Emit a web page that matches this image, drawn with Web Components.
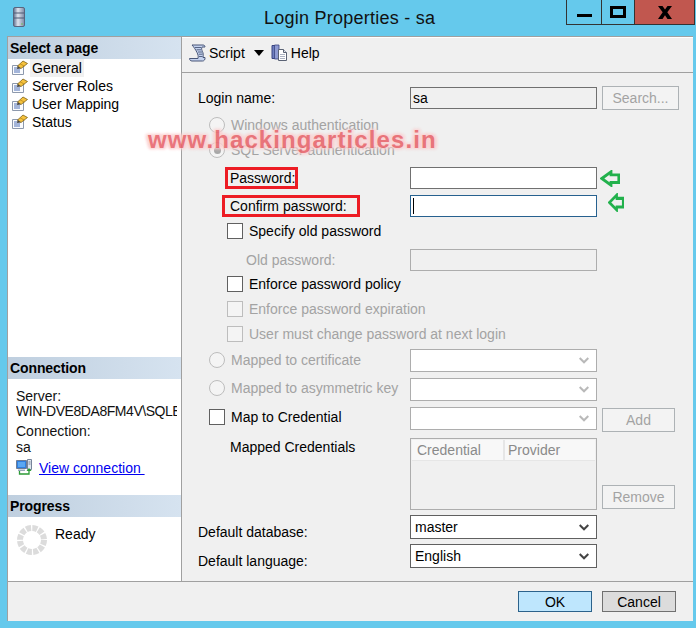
<!DOCTYPE html>
<html>
<head>
<meta charset="utf-8">
<title>Login Properties - sa</title>
<style>
  html, body { margin: 0; padding: 0; background: #65c9ec; }
  body { font-family: "Liberation Sans", Arial, sans-serif; font-size: 14px; color: #000; }
</style>
</head>
<body>
<login-window></login-window>
<script>
// small base class, every element just gives css + html
class Base extends HTMLElement {
  constructor () {
    super()
    this.shadow = this.attachShadow({ mode: 'open' })
  }

  connectedCallback () {
    this.shadow.innerHTML = `<style>${this.css()}</style>${this.html()}`
  }

  css () { return ':host{display:block}' }
  html () { return '<slot></slot>' }
}

const PAGE_ICON = `<svg width="17" height="16" viewBox="0 0 17 16">
  <path d="M1.500 5.500h11v9h-11z" fill="#fbfcfe" stroke="#8d99ad"/>
  <path d="M3 8h3M3 10h6M3 12h6" stroke="#4d6fb5"/>
  <path d="M6.500 6l5.500-5 4.500 2.500-6.500 5z" fill="#f5c23e" stroke="#7d6218" stroke-width=".8"/>
  <path d="M9 3.800l4.500 2.400" stroke="#b98a1e" stroke-width=".8"/>
  <path d="M6.500 6l3.500 2.500-4 .5z" fill="#444"/>
</svg>`

const SCRIPT_ICON = `<svg width="18" height="18" viewBox="0 0 18 18">
  <path d="M3 1h11c1.500 0 2 1 2 2h-3c-.8 1.500-.2 3 .5 4.500s1 3.500.5 6h2c.3 2-.8 3.500-2.500 3.500H3c-1.600 0-2.500-1.200-2.500-2.500h8.500c.5-2.300 0-4-1-6S5 3 3 1z" fill="#c5d3ef" stroke="#4a5778"/>
  <path d="M6 3.500h6M7.500 5.800h4.500M9 8h4M9.800 10.200h3.700M10 12.500h3.500" stroke="#4a5778" stroke-width=".9"/>
</svg>`

const HELP_ICON = `<svg width="17" height="18" viewBox="0 0 17 18">
  <path d="M1 1.500h6v13H1z" fill="#6f7fc0" stroke="#3a4580"/>
  <path d="M3.500 1h4.500v14H3.500z" fill="#8f9bd2" stroke="#3a4580" stroke-width=".8"/>
  <path d="M7.500 5.500h5l3 3v8h-8z" fill="#fff" stroke="#5a6274"/>
  <path d="M12.500 5.500v3h3" fill="#dfe4ee" stroke="#5a6274"/>
  <path d="M9 10.500h5M9 12.500h5M9 14.500h5" stroke="#98a0b2" stroke-width=".8"/>
</svg>`

const CONN_ICON = `<svg width="17" height="16" viewBox="0 0 17 16">
  <path d="M.5 1.500h10v8H.5z" fill="#2f7fe0" stroke="#6d7d96"/>
  <path d="M2 3h7v5H2z" fill="#5aa7f2"/>
  <path d="M2 10.500h7v1.500H2z" fill="#9aa8ba"/>
  <path d="M11.500.500h4v10h-4z" fill="#dfe6ee" stroke="#77849a"/>
  <path d="M12.500 3h2M12.500 5h2" stroke="#77849a"/>
  <path d="M3.500 12v3h9.500V11" fill="none" stroke="#2c9a36" stroke-width="1.300"/>
  <path d="M10.500 12l2.500-3 2.500 3z" fill="#2c9a36"/>
</svg>`

class TitleBar extends Base {
  css () {
    return `
    :host{display:flex;height:36px;align-items:flex-start;position:relative}
    .logo{margin:7px 0 0 13px;width:12px;height:20px}
    .text{margin:7px 0 0 239px;font:18px/22px "Liberation Sans",sans-serif;color:#111;letter-spacing:.25px;white-space:nowrap}
    .btns{display:flex;height:25px;margin-left:auto;margin-right:1px;border:solid #333;border-width:0 1px 1px 1px;box-sizing:border-box;width:129px}
    .b{display:flex;align-items:center;justify-content:center;box-sizing:border-box}
    .min{width:35px;border-right:1px solid #333}
    .max{width:33px;border-right:1px solid #333}
    .close{flex:1;background:#c1574f}
    `
  }

  html () {
    return `
    <svg class="logo" viewBox="0 0 12 20">
      <defs><linearGradient id="g" x1="0" x2="1" y1="0" y2="0"><stop offset="0" stop-color="#5b6c8c"/><stop offset=".4" stop-color="#dfe4ee"/><stop offset="1" stop-color="#7a88a4"/></linearGradient></defs>
      <rect x=".5" y=".5" width="11" height="19" rx="1.500" fill="url(#g)" stroke="#59657e"/>
      <path d="M1 6h10M1 11h10" stroke="#4f5b74"/>
      <path d="M8 17h2" stroke="#6fbf5f"/>
    </svg>
    <span class="text">Login Properties - sa</span>
    <div class="btns">
      <div class="b min"><svg width="15" height="14" viewBox="0 0 15 14"><rect y="9" width="15" height="3"/></svg></div>
      <div class="b max"><svg width="16" height="12" viewBox="0 0 16 12"><path d="M0 0h16v12H0z M3 3v6h10V3z" fill-rule="evenodd"/></svg></div>
      <div class="b close"><svg width="14" height="13" viewBox="0 0 14 13"><path d="M0 0h4.500l2.500 3.600L9.500 0H14L9.300 6.300 14 13H9.500L7 9.300 4.500 13H0l4.700-6.700z"/></svg></div>
    </div>`
  }
}

class PaneHead extends Base {
  css () {
    return `:host{display:block;height:22px;line-height:22px;padding-left:2px;font-weight:bold;font-size:14px;letter-spacing:-.1px;
      background:linear-gradient(90deg,#bfcfdf,#d6e3f0)}`
  }
}

class PageLink extends Base {
  css () {
    return `
    :host{display:flex;height:18px;align-items:center;padding-left:3px;font-size:14px}
    svg{flex:none}
    span{padding:0 2px;margin-left:2px;line-height:18px}
    :host([active]) span{background:#f0f0f0}`
  }

  html () { return `${PAGE_ICON}<span><slot></slot></span>` }
}

class SidePane extends Base {
  css () {
    return `
    :host{display:flex;flex-direction:column;width:173px;flex:none;background:#fff;border-right:1px solid #a0a0a0}
    .pages{flex:1}
    .conn{height:138px}
    .prog{height:86px}
    .info{padding:9px 3px 0 8px;font-size:14px;line-height:16px;color:#111}
    .clip{overflow:hidden;white-space:nowrap;width:161px;line-height:15px;letter-spacing:-.45px}
    .sp{height:4px}
    .link{display:flex;align-items:flex-start;margin-top:4px}
    .link a{color:#0000f0;text-decoration:underline;margin:1px 0 0 6px;white-space:pre;line-height:17px}
    .ready{display:flex;padding:8px 0 0 9px}
    .ready span{margin-left:8px;line-height:18px}`
  }

  html () {
    return `
    <div class="pages">
      <pane-head>Select a page</pane-head>
      <page-link active>General</page-link>
      <page-link>Server Roles</page-link>
      <page-link>User Mapping</page-link>
      <page-link>Status</page-link>
    </div>
    <div class="conn">
      <pane-head>Connection</pane-head>
      <div class="info">
        <div>Server:</div>
        <div class="clip">WIN-DVE8DA8FM4V\\SQLE</div>
        <div class="sp"></div>
        <div>Connection:</div>
        <div>sa</div>
        <div class="link">${CONN_ICON}<a>View connection </a></div>
      </div>
    </div>
    <div class="prog">
      <pane-head>Progress</pane-head>
      <div class="ready">
        <svg width="30" height="30" viewBox="0 0 30 30"><circle cx="15" cy="15" r="12" fill="none" stroke="#dcdcdc" stroke-width="6" stroke-dasharray="5 1.280"/></svg>
        <span>Ready</span>
      </div>
    </div>`
  }
}

class ToolBar extends Base {
  css () {
    return `
    :host{display:flex;align-items:center;border-top:1px solid #fff;border-bottom:1px solid #a0a0a0;padding:0 0 4px 7px;box-sizing:border-box;height:36px;font-size:14px}
    span{margin-left:2px}
    span.help{margin-left:3px}
    .arrow{width:0;height:0;border:5px solid transparent;border-top:6px solid #000;border-bottom:0;margin:0 7px 0 9px}`
  }

  html () {
    return `${SCRIPT_ICON}<span>Script</span><i class="arrow"></i>${HELP_ICON}<span class="help">Help</span>`
  }
}

class FormRow extends Base {
  css () {
    return `
    :host{display:grid;grid-template-columns:212px 187px auto;grid-template-rows:minmax(0,1fr);align-items:center;font-size:14px}
    :host([list]) .lab{align-self:start}
    .side{display:flex;padding-left:5px;align-self:stretch;align-items:center}
    :host([list]) .side{align-items:flex-end}`
  }

  connectedCallback () {
    super.connectedCallback()
    this.style.height = this.getAttribute('h') + 'px'
    this.style.marginTop = (this.getAttribute('top') || 0) + 'px'
  }

  html () {
    return `<div class="lab"><slot name="label"></slot></div><div><slot name="field"></slot></div><div class="side"><slot name="side"></slot></div>`
  }
}

class PlainLabel extends Base {
  css () {
    return `:host{display:block;white-space:nowrap}
    :host([off]){color:#a3a3a3}`
  }

  connectedCallback () {
    super.connectedCallback()
    this.style.paddingLeft = (this.getAttribute('x') || 0) + 'px'
  }
}

// red marker the author drew round a label
class MarkBox extends Base {
  css () {
    return `:host{display:block;box-sizing:border-box;height:22px;line-height:16px;border:3px solid #ed1c24;white-space:nowrap}`
  }

  connectedCallback () {
    super.connectedCallback()
    this.style.marginLeft = this.getAttribute('x') + 'px'
    this.style.width = this.getAttribute('w') + 'px'
    this.style.paddingLeft = this.getAttribute('pad') + 'px'
  }
}

class TickItem extends Base {
  css () {
    return `
    :host{display:flex;align-items:center;white-space:nowrap}
    .box{box-sizing:border-box;width:16px;height:16px;border:1px solid #606060;background:#fff;flex:none;margin-right:6px}
    :host([radio]) .box{border-radius:50%;border:1.500px solid #c4c4c4;background:#f7f7f7;display:flex;align-items:center;justify-content:center}
    :host([off]){color:#a3a3a3}
    :host([off]) .box{border-color:#bdbdbd;background:#f4f4f4}
    :host([on]) .box::after{content:"";width:7px;height:7px;border-radius:50%;background:#a8a8a8}`
  }

  connectedCallback () {
    super.connectedCallback()
    this.style.paddingLeft = (this.getAttribute('x') || 0) + 'px'
  }

  html () { return '<i class="box"></i><span><slot></slot></span>' }
}

class TextBox extends Base {
  css () {
    return `
    :host{display:flex;align-items:center;box-sizing:border-box;width:187px;height:22px;border:1px solid #707070;background:#fff;padding-left:2px;font-size:14px}
    :host([ro]){background:#f0f0f0}
    :host([off]){background:#f0f0f0;border-color:#adadad}
    :host([focus]){border-color:#26618f}
    .caret{width:1px;height:16px;background:#000}`
  }

  html () {
    return this.hasAttribute('focus') ? '<i class="caret"></i>' : '<slot></slot>'
  }
}

class ComboBox extends Base {
  css () {
    return `
    :host{display:flex;align-items:center;justify-content:space-between;box-sizing:border-box;width:187px;height:24px;border:1px solid #606060;background:#fff;padding:0 7px 0 4px;font-size:14px}
    :host([off]){border-color:#adadad}
    path{stroke:#444}
    :host([off]) path{stroke:#b9b9b9}`
  }

  html () {
    return '<span><slot></slot></span><svg width="10" height="7" viewBox="0 0 10 7"><path d="M.7 1L5 5.300 9.300 1" fill="none" stroke-width="2"/></svg>'
  }
}

class PushButton extends Base {
  css () {
    return `
    :host{display:flex;align-items:center;justify-content:center;box-sizing:border-box;height:24px;border:1px solid #adb2b5;background:#f3f3f3;color:#a3a3a3;font-size:14px}
    :host([ok]){background:#bee6fd;border-color:#2c628b;color:#000;height:21px}
    :host([cancel]){background:#dcdcdc;border-color:#707070;color:#000;height:21px}`
  }

  connectedCallback () {
    super.connectedCallback()
    this.style.width = this.getAttribute('w') + 'px'
  }
}

class GreenArrow extends Base {
  css () { return ':host{display:block;flex:none}' }

  html () {
    const w = this.getAttribute('w')
    const h = this.getAttribute('h')
    return `<svg width="${w}" height="${h}" viewBox="0 0 20 17" preserveAspectRatio="none" style="display:block">
      <path d="M1.800 8.500L11 1.800V4.800H18.800V12.500H11V15.200z" fill="none" stroke="#22b14c" stroke-width="2.800"/>
    </svg>`
  }
}

class CredList extends Base {
  css () {
    return `
    :host{display:block;box-sizing:border-box;width:187px;height:72px;border:1px solid #adadad;background:#f0f0f0;color:#8a8a8a;font-size:14px;padding:1px}
    .head{display:flex;height:20px;background:#f8f8f8;border-bottom:1px solid #e6e6e6;align-items:center}
    .c1{width:93px;padding-left:5px;box-sizing:border-box;border-right:2px solid #e6e6e6;height:100%;line-height:20px}
    .c2{padding-left:3px;line-height:20px}`
  }

  html () {
    return '<div class="head"><div class="c1">Credential</div><div class="c2">Provider</div></div>'
  }
}

class LoginForm extends Base {
  css () {
    return ':host{display:block;padding:13px 0 0 16px;flex:1}'
  }

  html () {
    return `
    <form-row h="24">
      <plain-label slot="label">Login name:</plain-label>
      <text-box slot="field" ro>sa</text-box>
      <push-button slot="side" w="77">Search...</push-button>
    </form-row>
    <form-row h="22" top="4"><tick-item slot="label" radio off x="11">Windows authentication</tick-item></form-row>
    <form-row h="22" top="3"><tick-item slot="label" radio off on x="11">SQL Server authentication</tick-item></form-row>
    <form-row h="22" top="6">
      <mark-box slot="label" x="27" w="73" pad="2">Password:</mark-box>
      <text-box slot="field"></text-box>
      <green-arrow slot="side" w="20" h="17" style="margin-left:-2px"></green-arrow>
    </form-row>
    <form-row h="22" top="6">
      <mark-box slot="label" x="24" w="138" pad="5">Confirm password:</mark-box>
      <text-box slot="field" focus></text-box>
      <green-arrow slot="side" w="16" h="19" style="margin:-7px 0 0 6px"></green-arrow>
    </form-row>
    <form-row h="22" top="3"><tick-item slot="label" x="29">Specify old password</tick-item></form-row>
    <form-row h="22" top="7">
      <plain-label slot="label" off x="48">Old password:</plain-label>
      <text-box slot="field" off></text-box>
    </form-row>
    <form-row h="22" top="2"><tick-item slot="label" x="29">Enforce password policy</tick-item></form-row>
    <form-row h="22" top="3"><tick-item slot="label" off x="29">Enforce password expiration</tick-item></form-row>
    <form-row h="22" top="3"><tick-item slot="label" off x="29">User must change password at next login</tick-item></form-row>
    <form-row h="23" top="4">
      <tick-item slot="label" radio off x="11" style="margin-bottom:2px">Mapped to certificate</tick-item>
      <combo-box slot="field" off style="height:23px"></combo-box>
    </form-row>
    <form-row h="23" top="6">
      <tick-item slot="label" radio off x="11" style="margin-bottom:3px">Mapped to asymmetric key</tick-item>
      <combo-box slot="field" off style="height:23px"></combo-box>
    </form-row>
    <form-row h="23" top="6">
      <tick-item slot="label" x="11" style="margin-bottom:3px">Map to Credential</tick-item>
      <combo-box slot="field" off style="height:23px"></combo-box>
      <push-button slot="side" w="73" style="margin-top:3px">Add</push-button>
    </form-row>
    <form-row h="72" top="8" list>
      <plain-label slot="label" x="32" style="margin-top:1px">Mapped Credentials</plain-label>
      <cred-list slot="field"></cred-list>
      <push-button slot="side" w="73" style="margin-bottom:1px">Remove</push-button>
    </form-row>
    <form-row h="24" top="5">
      <plain-label slot="label" style="margin-top:10px">Default database:</plain-label>
      <combo-box slot="field">master</combo-box>
    </form-row>
    <form-row h="24" top="5">
      <plain-label slot="label" style="margin-top:10px">Default language:</plain-label>
      <combo-box slot="field">English</combo-box>
    </form-row>`
  }
}

class BottomBar extends Base {
  css () {
    return `
    :host{display:flex;height:40px;box-sizing:border-box;border-top:1px solid #a0a0a0;background:#f0f0f0;padding:9px 0 0 510px;gap:10px;position:relative}
    .grip{position:absolute;right:1px;bottom:1px;width:6px;height:6px;background:radial-gradient(circle,#b0b0b0 30%,transparent 35%) 0 0/2px 2px}`
  }

  html () {
    return `<push-button ok w="74">OK</push-button><push-button cancel w="74">Cancel</push-button><i class="grip"></i>`
  }
}

// the blog's stamp sits on top of the dialog
class WaterMark extends Base {
  css () {
    return `
    :host{display:block;position:absolute;left:148px;top:125px;font:bold 24px/30px "Liberation Sans",sans-serif;letter-spacing:1.100px;white-space:nowrap;color:#e8636a;
      text-shadow:0 0 2px #fbd0d0,0 0 4px #fbd0d0,2px 1px 3px #fbd0d0,-2px -1px 3px #fbd0d0,2px -1px 3px #fbd0d0,-2px 1px 3px #fbd0d0;pointer-events:none;opacity:.88}`
  }
}

class LoginWindow extends Base {
  css () {
    return `
    :host{display:block;position:relative;width:696px;height:628px;background:#65c9ec;overflow:hidden}
    .frame{margin:0 3px 0 7px;height:585px;display:flex;flex-direction:column;background:#f0f0f0;border-top:1px solid #a0a0a0;box-sizing:border-box;border-left:1px solid #a0a0a0}
    .mid{flex:1;display:flex;min-height:0}
    .right{flex:1;display:flex;flex-direction:column;min-width:0}`
  }

  html () {
    return `
    <title-bar></title-bar>
    <div class="frame">
      <div class="mid">
        <side-pane></side-pane>
        <div class="right">
          <tool-bar></tool-bar>
          <login-form></login-form>
        </div>
      </div>
      <bottom-bar></bottom-bar>
    </div>
    <water-mark>www.hackingarticles.in</water-mark>`
  }
}

customElements.define('title-bar', TitleBar)
customElements.define('pane-head', PaneHead)
customElements.define('page-link', PageLink)
customElements.define('side-pane', SidePane)
customElements.define('tool-bar', ToolBar)
customElements.define('form-row', FormRow)
customElements.define('plain-label', PlainLabel)
customElements.define('mark-box', MarkBox)
customElements.define('tick-item', TickItem)
customElements.define('text-box', TextBox)
customElements.define('combo-box', ComboBox)
customElements.define('push-button', PushButton)
customElements.define('green-arrow', GreenArrow)
customElements.define('cred-list', CredList)
customElements.define('login-form', LoginForm)
customElements.define('bottom-bar', BottomBar)
customElements.define('water-mark', WaterMark)
customElements.define('login-window', LoginWindow)
</script>
</body>
</html>
